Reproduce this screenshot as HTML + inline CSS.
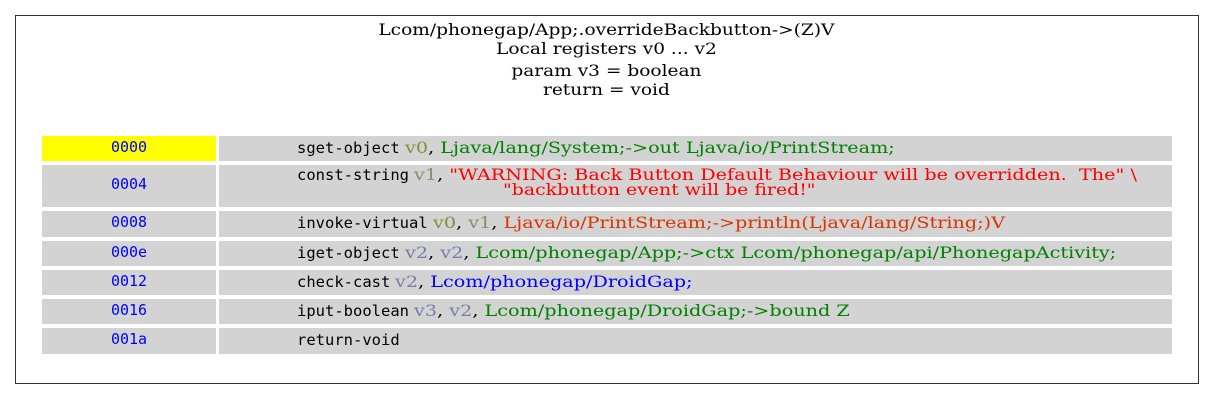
<!DOCTYPE html>
<html><head><style>
body{margin:0;width:1213px;height:400px;background:#fff;position:relative;font-family:"DejaVu Serif",serif;font-size:16px;}
.box{position:absolute;left:15px;top:15px;width:1182px;height:367px;border:1px solid #333;}
.t{position:absolute;left:0;width:1213px;text-align:center;line-height:19px;color:#000;transform:scaleX(1.16);transform-origin:607px 0;}
.c{position:absolute;background:#d3d3d3;}
.a{left:42px;width:174px;text-align:center;color:#0000ff;font-family:"DejaVu Sans Mono",monospace;font-size:15px;}
.b{left:219px;width:953px;}
.m{font-family:"DejaVu Sans Mono",monospace;font-size:15.5px;color:#000;}
.in{position:absolute;left:78px;top:3px;white-space:pre;line-height:18px;}
.s{display:inline-block;transform:scaleX(1.2);transform-origin:0 0;}
.o{color:#8b8b3c}.g{color:#008000}.r{color:#ff0000}.or{color:#dd3300}.p{color:#7b7bab}.bl{color:#0000ff}.gy{color:#8b8b6b}
</style></head><body>
<div class="box"></div>
<div class="t" style="top:20px">Lcom/phonegap/App;.overrideBackbutton-&gt;(Z)V</div>
<div class="t" style="top:39px">Local registers v0 ... v2</div>
<div class="t" style="top:61px">param v3 = boolean</div>
<div class="t" style="top:80px">return = void</div>

<div class="c a" style="top:136px;height:25px;line-height:22px;background:#ffff00">0000</div>
<div class="c b" style="top:136px;height:25px"><div class="in"><span class="m">sget-object</span> <span class="s"><span class="o">v0</span>, <span class="g">Ljava/lang/System;-&gt;out Ljava/io/PrintStream;</span></span></div></div>

<div class="c a" style="top:165px;height:42px;line-height:38px">0004</div>
<div class="c b" style="top:165px;height:42px"><div class="in" style="top:2px;line-height:16px"><span class="m">const-string</span> <span class="s"><span class="gy">v1</span>, <span class="r">"WARNING: Back Button Default Behaviour will be overridden.  The" \</span></span></div><div style="position:absolute;left:-32px;width:953px;top:17px;text-align:center;line-height:16px;transform:scaleX(1.18);transform-origin:500px 0" class="r">"backbutton event will be fired!"</div></div>

<div class="c a" style="top:211px;height:26px;line-height:22px">0008</div>
<div class="c b" style="top:211px;height:26px"><div class="in"><span class="m">invoke-virtual</span> <span class="s"><span class="o">v0</span>, <span class="gy">v1</span>, <span class="or">Ljava/io/PrintStream;-&gt;println(Ljava/lang/String;)V</span></span></div></div>

<div class="c a" style="top:241px;height:25px;line-height:22px">000e</div>
<div class="c b" style="top:241px;height:25px"><div class="in"><span class="m">iget-object</span> <span class="s"><span class="p">v2</span>, <span class="p">v2</span>, <span class="g">Lcom/phonegap/App;-&gt;ctx Lcom/phonegap/api/PhonegapActivity;</span></span></div></div>

<div class="c a" style="top:270px;height:25px;line-height:22px">0012</div>
<div class="c b" style="top:270px;height:25px"><div class="in"><span class="m">check-cast</span> <span class="s"><span class="p">v2</span>, <span class="bl">Lcom/phonegap/DroidGap;</span></span></div></div>

<div class="c a" style="top:299px;height:25px;line-height:22px">0016</div>
<div class="c b" style="top:299px;height:25px"><div class="in"><span class="m">iput-boolean</span> <span class="s"><span class="p">v3</span>, <span class="p">v2</span>, <span class="g">Lcom/phonegap/DroidGap;-&gt;bound Z</span></span></div></div>

<div class="c a" style="top:328px;height:26px;line-height:22px">001a</div>
<div class="c b" style="top:328px;height:26px"><div class="in"><span class="m">return-void</span></div></div>
</body></html>
